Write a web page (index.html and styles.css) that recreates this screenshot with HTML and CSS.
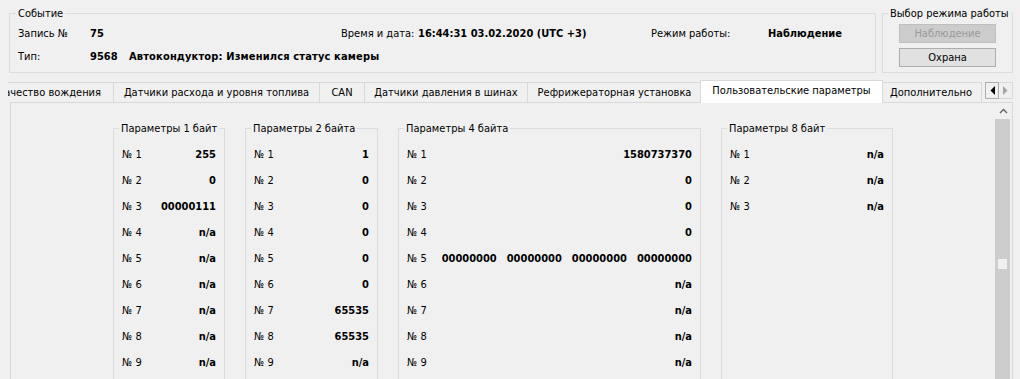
FILE: index.html
```html
<!DOCTYPE html>
<html lang="ru">
<head>
<meta charset="utf-8">
<title>Пользовательские параметры</title>
<link rel="stylesheet" href="styles.css">
</head>
<body>
<div class="top">
  <fieldset class="gb event">
    <legend>Событие</legend>
    <div class="egrid">
      <span>Запись №</span>
      <b>75</b>
      <span>Время и дата:</span>
      <b>16:44:31 03.02.2020 (UTC +3)</b>
      <span>Режим работы:</span>
      <b>Наблюдение</b>
      <span>Тип:</span>
      <span class="etype"><b class="ecode">9568</b><b class="etext">Автокондуктор: Изменился статус камеры</b></span>
    </div>
  </fieldset>
  <fieldset class="gb mode">
    <legend>Выбор режима работы</legend>
    <div class="modebtns">
      <button class="btn" disabled>Наблюдение</button>
      <button class="btn">Охрана</button>
    </div>
  </fieldset>
</div>

<div class="tabstrip">
  <div class="tabs">
    <div class="tab t1">Качество вождения</div>
    <div class="tab t2">Датчики расхода и уровня топлива</div>
    <div class="tab t3">CAN</div>
    <div class="tab t4">Датчики давления в шинах</div>
    <div class="tab t5">Рефрижераторная установка</div>
    <div class="tab sel">Пользовательские параметры</div>
    <div class="tab t7">Дополнительно</div>
  </div>
  <div class="arrows">
    <div class="abtn"><svg width="5" height="9" viewBox="0 0 5 9"><polygon points="5,0 5,9 0.5,4.5" fill="#000"/></svg></div>
    <div class="abtn off"><svg width="5" height="9" viewBox="0 0 5 9"><polygon points="0,0 0,9 4.5,4.5" fill="#a3a3a3"/></svg></div>
  </div>
</div>

<div class="panel">
  <div class="content">
    <fieldset class="gb pg g1">
      <legend>Параметры 1 байт</legend>
      <div class="prow"><span>№ 1</span><b>255</b></div>
      <div class="prow"><span>№ 2</span><b>0</b></div>
      <div class="prow"><span>№ 3</span><b>00000111</b></div>
      <div class="prow"><span>№ 4</span><b>n/a</b></div>
      <div class="prow"><span>№ 5</span><b>n/a</b></div>
      <div class="prow"><span>№ 6</span><b>n/a</b></div>
      <div class="prow"><span>№ 7</span><b>n/a</b></div>
      <div class="prow"><span>№ 8</span><b>n/a</b></div>
      <div class="prow"><span>№ 9</span><b>n/a</b></div>
    </fieldset>
    <fieldset class="gb pg g2">
      <legend>Параметры 2 байта</legend>
      <div class="prow"><span>№ 1</span><b>1</b></div>
      <div class="prow"><span>№ 2</span><b>0</b></div>
      <div class="prow"><span>№ 3</span><b>0</b></div>
      <div class="prow"><span>№ 4</span><b>0</b></div>
      <div class="prow"><span>№ 5</span><b>0</b></div>
      <div class="prow"><span>№ 6</span><b>0</b></div>
      <div class="prow"><span>№ 7</span><b>65535</b></div>
      <div class="prow"><span>№ 8</span><b>65535</b></div>
      <div class="prow"><span>№ 9</span><b>n/a</b></div>
    </fieldset>
    <fieldset class="gb pg g4">
      <legend>Параметры 4 байта</legend>
      <div class="prow"><span>№ 1</span><b>1580737370</b></div>
      <div class="prow"><span>№ 2</span><b>0</b></div>
      <div class="prow"><span>№ 3</span><b>0</b></div>
      <div class="prow"><span>№ 4</span><b>0</b></div>
      <div class="prow"><span>№ 5</span><span class="bits"><b>00000000</b><b>00000000</b><b>00000000</b><b>00000000</b></span></div>
      <div class="prow"><span>№ 6</span><b>n/a</b></div>
      <div class="prow"><span>№ 7</span><b>n/a</b></div>
      <div class="prow"><span>№ 8</span><b>n/a</b></div>
      <div class="prow"><span>№ 9</span><b>n/a</b></div>
    </fieldset>
    <fieldset class="gb pg g8">
      <legend>Параметры 8 байт</legend>
      <div class="prow"><span>№ 1</span><b>n/a</b></div>
      <div class="prow"><span>№ 2</span><b>n/a</b></div>
      <div class="prow"><span>№ 3</span><b>n/a</b></div>
    </fieldset>
  </div>
  <div class="vscroll">
    <div class="vs-up"><svg width="9" height="6" viewBox="0 0 9 6"><polyline points="1,5 4.5,1.5 8,5" fill="none" stroke="#606060" stroke-width="1.3"/></svg></div>
    <div class="vs-thumb"><div class="vs-grip"></div></div>
  </div>
</div>
</body>
</html>
```

FILE: styles.css
```css
* { box-sizing: border-box; }
html, body { margin: 0; padding: 0; }
body {
  width: 1020px;
  height: 379px;
  overflow: hidden;
  background: #f0f0f0;
  color: #000;
  font-family: "DejaVu Sans Condensed", "Liberation Sans", sans-serif;
  font-size: 11px;
}
b { font-weight: bold; }

/* ---- group boxes ---- */
fieldset.gb {
  margin: 0;
  min-width: 0;
  border: 1px solid #dcdcdc;
}
fieldset.gb > legend {
  padding: 0 2px;
  margin-left: -2px;
  line-height: 13px;
  font-size: 11px;
  white-space: nowrap;
}

/* ---- top area ---- */
.top {
  display: flex;
  align-items: stretch;
  gap: 6px;
  padding: 7px 0 0 9px;
}
.event {
  width: 867px;
  padding: 2px 8px 4px 8px;
}
.egrid {
  display: grid;
  grid-template-columns: 72px 251px 77px 233px 117px auto;
  grid-auto-rows: 23px;
  align-items: center;
  white-space: nowrap;
}
.etype {
  grid-column: 2 / -1;
  display: flex;
}
.ecode { width: 39px; }
.etext { letter-spacing: 0.15px; }

fieldset.mode {
  width: 131px;
  padding: 4px 0 0 16px;
}
fieldset.mode > legend { margin-left: -11px; }
.modebtns {
  display: flex;
  flex-direction: column;
  gap: 5px;
}
.btn {
  width: 97px;
  height: 19px;
  margin: 0;
  padding: 0;
  font-family: inherit;
  font-size: 11px;
  line-height: 17px;
  color: #000;
  background: #e1e1e1;
  border: 1px solid #adadad;
  border-radius: 0;
}
.btn:disabled {
  background: #cccccc;
  border-color: #bfbfbf;
  color: #9a9a9a;
}

/* ---- tabs ---- */
.tabstrip {
  display: flex;
  width: 1005px;
  height: 23px;
  margin: 7px 0 0 8px;
  position: relative;
  z-index: 1;
}
.tabs {
  display: flex;
  flex: 1;
  overflow: hidden;
}
.tab {
  flex: none;
  height: 20px;
  margin-top: 2px;
  border-top: 1px solid #d9d9d9;
  border-right: 1px solid #d9d9d9;
  background: #f0f0f0;
  line-height: 19px;
  text-align: center;
  white-space: nowrap;
  overflow: hidden;
}
.t1 { width: 106px; display: flex; justify-content: flex-end; padding-right: 12px; }
.t2 { width: 206px; }
.t3 { width: 45px; }
.t4 { width: 163px; }
.t5 { width: 174px; }
.t7 { width: 101px; }
.tab.sel {
  width: 183px;
  height: 23px;
  margin: 0 -2px;
  border: 1px solid #d9d9d9;
  border-bottom: 0;
  background: #ffffff;
  line-height: 20px;
  position: relative;
  z-index: 1;
}
.arrows {
  display: flex;
  width: 28px;
  height: 17px;
  margin-top: 2px;
}
.abtn {
  width: 14px;
  height: 17px;
  border: 1px solid #adadad;
  background: #f0f0f0;
  display: flex;
  align-items: center;
  justify-content: center;
}
.abtn.off {
  border-color: #d9d9d9;
  border-left: 0;
}

/* ---- panel ---- */
.panel {
  display: flex;
  width: 1003px;
  height: 300px;
  margin: -1px 0 0 10px;
  border: 1px solid #d9d9d9;
}
.content {
  flex: 1;
  display: flex;
  align-items: stretch;
  gap: 20px;
  padding: 19px 0 0 102px;
}
fieldset.pg {
  padding: 7px 8px 0 8px;
}
fieldset.pg > legend { margin-left: -3px; }
.g1 { width: 112px; }
.g2 { width: 133px; }
.g4 { width: 303px; }
.g8 { width: 172px; }
.prow {
  display: flex;
  justify-content: space-between;
  height: 26px;
  line-height: 26px;
  white-space: nowrap;
}
.bits {
  display: flex;
  gap: 10px;
}

/* ---- scrollbar ---- */
.vscroll {
  width: 17px;
  display: flex;
  flex-direction: column;
}
.vs-up {
  height: 16px;
  display: flex;
  align-items: center;
  justify-content: center;
}
.vs-thumb {
  flex: 1;
  width: 15px;
  background: #cdcdcd;
}
.vs-grip {
  width: 9px;
  height: 10px;
  margin: 140px 0 0 3px;
  background: #f0f0f0;
}
```
